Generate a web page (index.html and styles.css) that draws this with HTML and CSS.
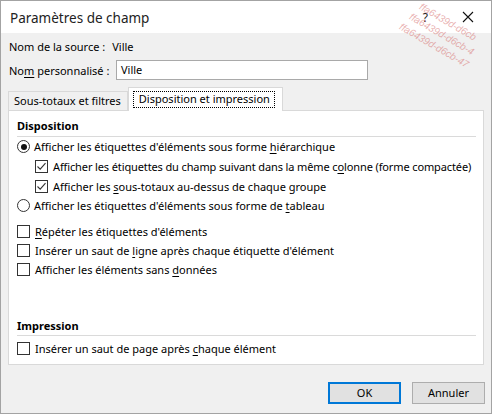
FILE: index.html
```html
<!DOCTYPE html>
<html lang="fr">
<head>
<meta charset="utf-8">
<title>Paramètres de champ</title>
<link rel="stylesheet" href="styles.css">
</head>
<body>
<div class="window">
  <div class="titlebar">
    <span class="title">Paramètres de champ</span>
    <span class="help">?</span>
    <svg class="close" width="12" height="12" viewBox="0 0 12 12"><path d="M1 1 L11 11 M11 1 L1 11" stroke="#111" stroke-width="1.1" fill="none"/></svg>
  </div>
  <div class="body">
    <div class="row src"><span class="lbl">Nom de la source :</span><span>Ville</span></div>
    <div class="row name"><span class="lbl2">No<u>m</u> personnalisé :</span><div class="input">Ville</div></div>
    <div class="tabs">
      <div class="tab">Sous-totaux et filtres</div>
      <div class="tab active"><span class="focus">Disposition et impression</span></div>
    </div>
    <div class="panel">
      <div class="gtitle">Disposition</div>
      <div class="sep"></div>
      <div class="opt r1"><span class="radio on"></span><span>Afficher les étiquettes d'éléments sous forme <u>h</u>iérarchique</span></div>
      <div class="opt sub c1"><span class="cb on"><svg width="11" height="11" viewBox="0 0 11 11"><path d="M1.5 5.5 L4.2 8.2 L9.5 2.2" stroke="#333" stroke-width="1.1" fill="none"/></svg></span><span class="tight">Afficher les étiquettes du champ suivant dans la même c<u>o</u>lonne (forme compactée)</span></div>
      <div class="opt sub"><span class="cb on"><svg width="11" height="11" viewBox="0 0 11 11"><path d="M1.5 5.5 L4.2 8.2 L9.5 2.2" stroke="#333" stroke-width="1.1" fill="none"/></svg></span><span>Afficher les <u>s</u>ous-totaux au-dessus de chaque groupe</span></div>
      <div class="opt"><span class="radio"></span><span>Afficher les étiquettes d'éléments sous forme de <u>t</u>ableau</span></div>
      <div class="opt cbrow gap"><span class="cb"></span><span><u>R</u>épéter les étiquettes d'éléments</span></div>
      <div class="opt cbrow"><span class="cb"></span><span>Insérer un saut de <u>l</u>igne après chaque étiquette d'élément</span></div>
      <div class="opt cbrow"><span class="cb"></span><span>Afficher les éléments sans <u>d</u>onnées</span></div>
      <div class="spacer"></div>
      <div class="gtitle">Impression</div>
      <div class="sep sep2"></div>
      <div class="opt cbrow"><span class="cb"></span><span>Insérer un saut de page après <u>c</u>haque élément</span></div>
    </div>
    <div class="buttons">
      <div class="btn ok">OK</div>
      <div class="btn">Annuler</div>
    </div>
  </div>
  <div class="wm">
    <span class="w1">ffa6439d-d6cb</span>
    <span class="w2">ffa6439d-d6cb-4</span>
    <span class="w3">ffa6439d-d6cb-47</span>
  </div>
</div>
</body>
</html>
```
FILE: styles.css
```css
html, body { margin: 0; padding: 0; background: #ffffff; }
body { font-family: "Noto Sans", "Liberation Sans", sans-serif; font-size: 11px; color: #000; white-space: nowrap; }
u { text-decoration: underline; text-underline-offset: 2px; }
.window {
  position: relative;
  width: 490px;
  height: 412px;
  border: 1px solid #a3a3a3;
  background: #f0f0f0;
  overflow: hidden;
}
.titlebar {
  height: 32px;
  background: #fff;
  display: flex;
  align-items: center;
  padding-left: 9px;
  box-sizing: border-box;
}
.title { font-size: 13.5px; color: #222; flex: 1; margin-top: 1px; }
.help { font-size: 12px; color: #222; margin-right: 34px; margin-top: 1px; }
.close { margin-right: 17px; }
.body { padding: 0 6px 0 7px; }
.row { display: flex; align-items: center; padding-left: 1px; }
.src { height: 22px; margin-top: 2px; }
.src .lbl { margin-right: 7px; }
.name { height: 24px; margin-top: 1px; }
.lbl2 { width: 107px; flex: none; }
.input {
  width: 246px;
  height: 18px;
  border: 1px solid #a9a9a9;
  background: #fff;
  padding-left: 4px;
  line-height: 18px;
}
.tabs { display: flex; align-items: flex-end; height: 27px; margin-top: 1px; position: relative; z-index: 1; }
.tab {
  height: 18px;
  line-height: 17px;
  border: 1px solid #d9d9d9;
  border-bottom: none;
  background: #f0f0f0;
  padding: 0 6px 0 5px;
}
.tab.active {
  height: 23px;
  background: #fff;
  border-color: #d9d9d9;
  padding: 0 7px 0 4px;
  margin-bottom: -1px;
  display: flex;
  align-items: center;
}
.focus { border: 1px dotted #000; padding: 0 4px 1px 5px; line-height: 14px; }
.panel {
  width: 476px;
  height: 255px;
  background: #fff;
  border: 1px solid #d9d9d9;
  padding: 7px 7px 0 8px;
  box-sizing: border-box;
  display: flex;
  flex-direction: column;
}
.gtitle { font-weight: bold; height: 16px; line-height: 16px; }
.sep { height: 1px; background: #dadada; margin: 2px 0 0 0; width: 459px; }
.opt { display: flex; align-items: center; height: 19px; }
.opt.r1 { height: 19px; }
.opt.c1 { height: 21px; }
.opt.gap { margin-top: 7px; }
.tight { letter-spacing: -0.12px; }
.sub { padding-left: 18px; }
.radio {
  width: 11px; height: 11px;
  border: 1px solid #333;
  border-radius: 50%;
  margin-right: 4px;
  position: relative;
  flex: none;
}
.radio.on::after {
  content: "";
  position: absolute;
  left: 2.5px; top: 2.5px;
  width: 6px; height: 6px;
  border-radius: 50%;
  background: #111;
}
.cb {
  width: 11px; height: 11px;
  border: 1px solid #333;
  margin-right: 5px;
  flex: none;
  display: flex;
  align-items: center;
  justify-content: center;
  background: #fff;
}
.spacer { flex: 1; }
.sep2 { margin: 1px 0 3px 0; }
.panel > .opt:last-child { margin-bottom: 6px; }
.buttons { display: flex; justify-content: flex-end; gap: 11px; margin-top: 17px; padding-right: 0; }
.btn {
  width: 71px; height: 20px;
  border: 1px solid #adadad;
  background: #e1e1e1;
  text-align: center;
  line-height: 20px;
}
.btn.ok { width: 69px; height: 18px; line-height: 18px; border: 2px solid #0078d7; }
.wm { position: absolute; left: 0; top: 0; width: 100%; height: 100%; pointer-events: none; }
.wm span {
  position: absolute;
  font-family: "Liberation Sans", sans-serif;
  font-size: 10px;
  font-style: italic;
  color: rgba(214, 110, 110, 0.55);
  transform: rotate(30deg);
  transform-origin: left top;
}
.w1 { left: 422px; top: 0px; }
.w2 { left: 412px; top: 10px; }
.w3 { left: 402px; top: 20px; }
```
